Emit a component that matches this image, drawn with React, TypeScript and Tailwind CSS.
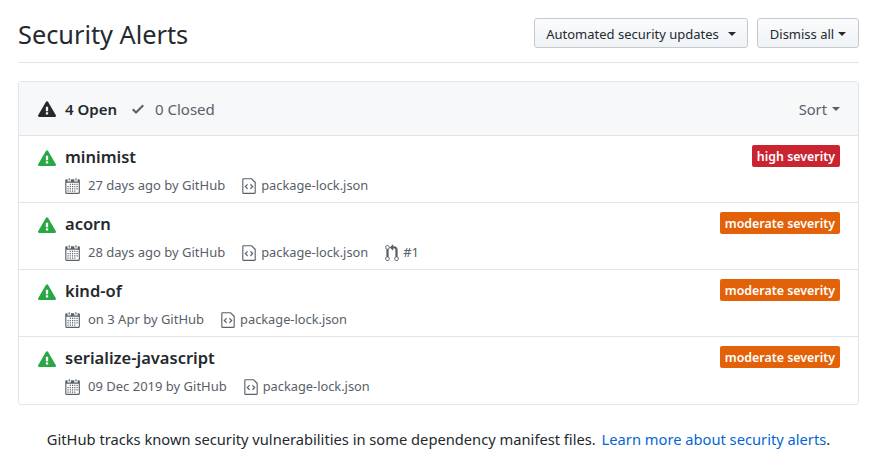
import React from 'react';

const AlertIcon = ({ className }: { className: string }) => (
    <svg viewBox="0 0 16 16" className={className} fill="currentColor">
        <path fillRule="evenodd" d="M8.893 1.5c-.183-.31-.52-.5-.887-.5s-.703.19-.886.5L.138 13.499a.98.98 0 000 1.001c.193.31.53.501.886.501h13.964c.367 0 .704-.19.877-.5a1.03 1.03 0 00.01-1.002L8.893 1.5zm.133 11.497H6.987v-2.003h2.039v2.003zm0-3.004H6.987V5.987h2.039v4.006z" />
    </svg>
);

const CalendarIcon = () => (
    <svg viewBox="0 0 14 16" className="w-[16px] h-[18px] shrink-0" fill="currentColor">
        <path fillRule="evenodd" d="M13 2h-1v1.5c0 .28-.22.5-.5.5h-2c-.28 0-.5-.22-.5-.5V2H6v1.5c0 .28-.22.5-.5.5h-2c-.28 0-.5-.22-.5-.5V2H2c-.55 0-1 .45-1 1v11c0 .55.45 1 1 1h11c.55 0 1-.45 1-1V3c0-.55-.45-1-1-1zm0 12H2V5h11v9zM5 3H4V1h1v2zm6 0h-1V1h1v2zM6 7H5V6h1v1zm2 0H7V6h1v1zm2 0H9V6h1v1zm2 0h-1V6h1v1zM4 9H3V8h1v1zm2 0H5V8h1v1zm2 0H7V8h1v1zm2 0H9V8h1v1zm2 0h-1V8h1v1zm-8 2H3v-1h1v1zm2 0H5v-1h1v1zm2 0H7v-1h1v1zm2 0H9v-1h1v1zm2 0h-1v-1h1v1zm-8 2H3v-1h1v1zm2 0H5v-1h1v1zm2 0H7v-1h1v1zm2 0H9v-1h1v1z" />
    </svg>
);

const FileCodeIcon = () => (
    <svg viewBox="0 0 12 16" className="w-[14px] h-[18px] shrink-0" fill="currentColor">
        <path fillRule="evenodd" d="M8.5 1H1c-.55 0-1 .45-1 1v12c0 .55.45 1 1 1h10c.55 0 1-.45 1-1V4.5L8.5 1zM11 14H1V2h7l3 3v9zM5 6.98L3.5 8.5 5 10l-.5 1L2 8.5 4.5 6l.5.98zM7.5 6L10 8.5 7.5 11l-.5-.98L8.5 8.5 7 7l.5-1z" />
    </svg>
);

const PullIcon = () => (
    <svg viewBox="0 0 12 16" className="w-[14px] h-[18px] shrink-0" fill="currentColor">
        <path fillRule="evenodd" d="M11 11.28V5c-.03-.78-.34-1.47-.94-2.06C9.46 2.35 8.78 2.03 8 2H7V0L4 3l3 3V4h1c.27.02.48.11.69.31.21.2.3.42.31.69v6.28A1.993 1.993 0 0010 15a1.993 1.993 0 001-3.72zm-1 2.92c-.66 0-1.2-.55-1.2-1.2 0-.65.55-1.2 1.2-1.2.65 0 1.2.55 1.2 1.2 0 .65-.55 1.2-1.2 1.2zM4 3c0-1.11-.89-2-2-2a1.993 1.993 0 00-1 3.72v6.56A1.993 1.993 0 002 15a1.993 1.993 0 001-3.72V4.72c.59-.34 1-.98 1-1.72zm-.8 10c0 .66-.55 1.2-1.2 1.2-.65 0-1.2-.55-1.2-1.2 0-.65.55-1.2 1.2-1.2.65 0 1.2.55 1.2 1.2zM2 4.2C1.34 4.2.8 3.65.8 3c0-.65.55-1.2 1.2-1.2.65 0 1.2.55 1.2 1.2 0 .65-.55 1.2-1.2 1.2z" />
    </svg>
);

const Caret = ({ className }: { className: string }) => (
    <span className={`inline-block w-0 h-0 border-x-[4px] border-x-transparent border-t-[4px] ${className}`} />
);

const alerts = [
    { name: 'minimist', meta: '27 days ago by GitHub', severity: 'high severity', high: true, pr: false },
    { name: 'acorn', meta: '28 days ago by GitHub', severity: 'moderate severity', high: false, pr: true },
    { name: 'kind-of', meta: 'on 3 Apr by GitHub', severity: 'moderate severity', high: false, pr: false },
    { name: 'serialize-javascript', meta: '09 Dec 2019 by GitHub', severity: 'moderate severity', high: false, pr: false },
];

const App = () => {
    return (
        <div className="w-[874px] h-[461px] bg-white overflow-hidden pl-[18px] pr-[15px] pt-[18px] font-['Noto_Sans',sans-serif] text-[#24292e]">
            <div className="flex items-start justify-between h-[45px] border-b border-[#e1e4e8]">
                <h1 className="text-[25.3px] leading-[32px] font-normal">Security Alerts</h1>
                <div className="flex gap-[9px]">
                    <button className="h-[30px] w-[214px] flex items-center justify-center gap-[9px] rounded-[3px] border border-[#c5c8cc] bg-gradient-to-b from-[#fafbfc] to-[#eff3f6] text-[13px] leading-[20px] pt-[2px] font-normal">
                        Automated security updates
                        <Caret className="border-t-[#24292e]" />
                    </button>
                    <button className="h-[30px] w-[102px] flex items-center justify-center gap-[4px] rounded-[3px] border border-[#c5c8cc] bg-gradient-to-b from-[#fafbfc] to-[#eff3f6] text-[13px] leading-[20px] pt-[2px] font-normal">
                        Dismiss all
                        <Caret className="border-t-[#24292e]" />
                    </button>
                </div>
            </div>

            <div className="mt-[18px] border border-[#e1e4e8] rounded-[3px]">
                <div className="h-[54px] bg-[#f6f8fa] border-b border-[#e1e4e8] flex items-center justify-between pl-[19px] pr-[18px] pt-[1px] text-[15px]">
                    <div className="flex items-center">
                        <AlertIcon className="w-[18px] h-[18px] text-[#24292e]" />
                        <span className="ml-[9px] font-semibold">4 Open</span>
                        <svg viewBox="0 0 12 16" className="ml-[15px] w-3 h-4 text-[#586069]" fill="currentColor">
                            <path fillRule="evenodd" d="M12 5l-8 8-4-4 1.5-1.5L4 10l6.5-6.5L12 5z" />
                        </svg>
                        <span className="ml-[11px] text-[#586069]">0 Closed</span>
                    </div>
                    <div className="flex items-center gap-[5px] text-[14.7px] text-[#586069]">
                        Sort
                        <Caret className="border-t-[#586069]" />
                    </div>
                </div>
                {alerts.map((a, i) => (
                    <div key={a.name} className={`h-[67px] flex items-start justify-between pl-[19px] pr-[18px] pt-[9px] ${i < 3 ? 'border-b border-[#e1e4e8]' : ''}`}>
                        <div>
                            <div className="flex items-center h-[24px]">
                                <AlertIcon className="w-[18px] h-[18px] mt-[2px] text-[#28a745]" />
                                <span className="ml-[9px] text-[16.5px] leading-[24px] font-semibold">{a.name}</span>
                            </div>
                            <div className="flex items-center mt-[8px] ml-[26px] h-[18px] text-[13px] text-[#586069] gap-[17px]">
                                <span className="flex items-center gap-[8px]"><CalendarIcon />{a.meta}</span>
                                <span className="flex items-center gap-[5px] text-[12.8px]"><FileCodeIcon />package-lock.json</span>
                                {a.pr && <span className="flex items-center gap-[4px]"><PullIcon />#1</span>}
                            </div>
                        </div>
                        <span className={`h-[22px] px-[5px] pt-[3px] flex items-center rounded-[2px] text-white text-[12.4px] font-semibold ${a.high ? 'bg-[#cb2431]' : 'bg-[#e36209]'}`}>
                            {a.severity}
                        </span>
                    </div>
                ))}
            </div>

            <p className="mt-[24px] text-center text-[14.7px] leading-[21px]">
                GitHub tracks known security vulnerabilities in some dependency manifest files.{' '}
                <a className="ml-[2px] text-[#0366d6]">Learn more about security alerts</a>.
            </p>
        </div>
    );
};

export default App;
